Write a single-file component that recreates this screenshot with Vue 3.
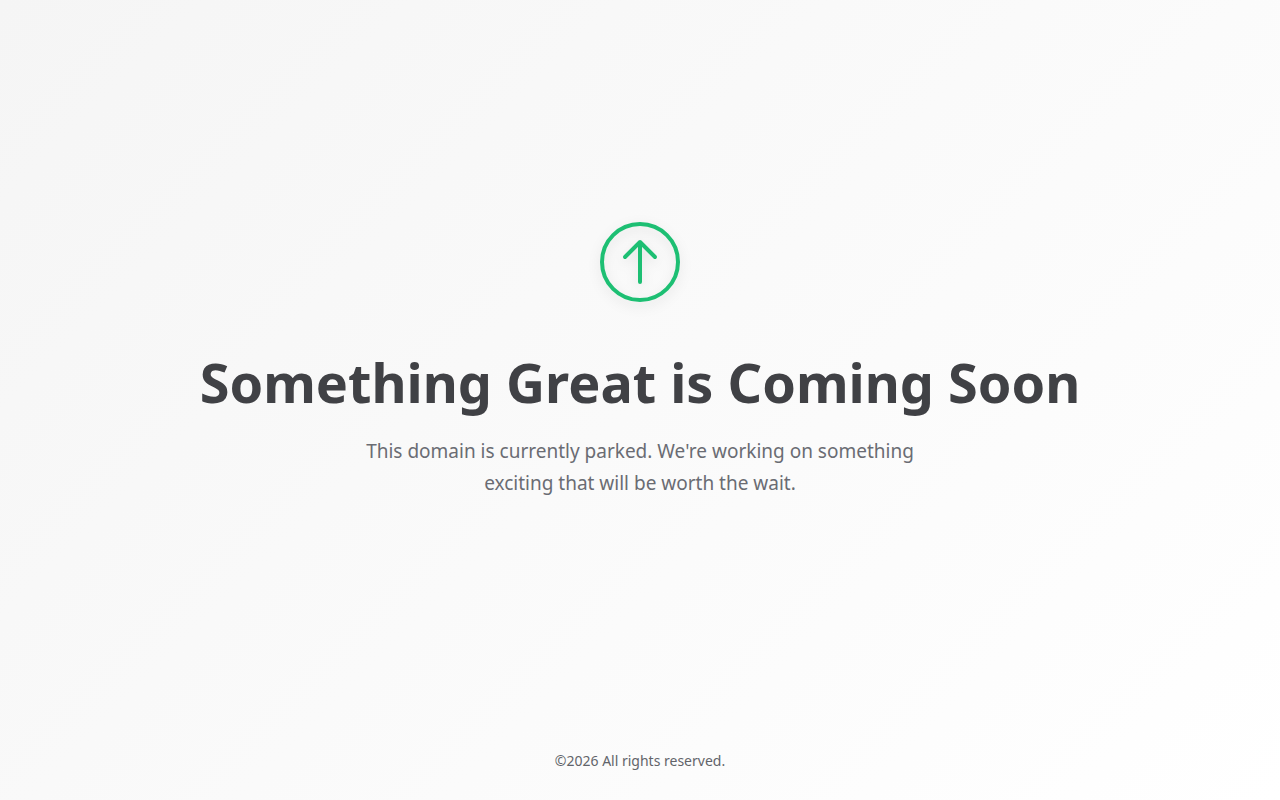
<script setup>
const year = 2026
</script>

<template>
  <div class="page">
    <main class="content">
      <svg class="icon" viewBox="0 0 80 80" fill="none" aria-hidden="true">
        <circle cx="40" cy="40" r="38" />
        <path d="M40 60V20M25 35L40 20L55 35" />
      </svg>
      <h1>Something Great is Coming Soon</h1>
      <p class="lead">
        This domain is currently parked. We're working on something exciting that will be worth the wait.
      </p>
    </main>
    <footer>©{{ year }} All rights reserved.</footer>
  </div>
</template>

<style>
body {
  margin: 0;
}
</style>

<style scoped>
.page {
  min-height: 100vh;
  box-sizing: border-box;
  display: flex;
  flex-direction: column;
  background: linear-gradient(135deg, #f5f5f5 0%, #fafafa 50%, #ffffff 100%);
  font-family: "Segoe UI", "Noto Sans", "Open Sans", sans-serif;
  text-align: center;
}
.content {
  flex: 1;
  display: flex;
  flex-direction: column;
  align-items: center;
  justify-content: center;
  padding: 0 32px;
}
.icon {
  width: 80px;
  height: 80px;
  margin-bottom: 48px;
  stroke: #1dbf73;
  stroke-width: 4;
  stroke-linecap: round;
  stroke-linejoin: round;
  filter: drop-shadow(0 4px 6px rgba(0, 0, 0, 0.1));
}
h1 {
  margin: 0 0 21px;
  font-size: 54px;
  line-height: 64px;
  font-weight: 700;
  color: #404145;
}
.lead {
  max-width: 600px;
  margin: 0;
  font-size: 19px;
  line-height: 32px;
  color: #6a6c73;
}
footer {
  padding: 30px 32px 29px;
  font-size: 14px;
  line-height: 20px;
  color: #62646a;
}
</style>
